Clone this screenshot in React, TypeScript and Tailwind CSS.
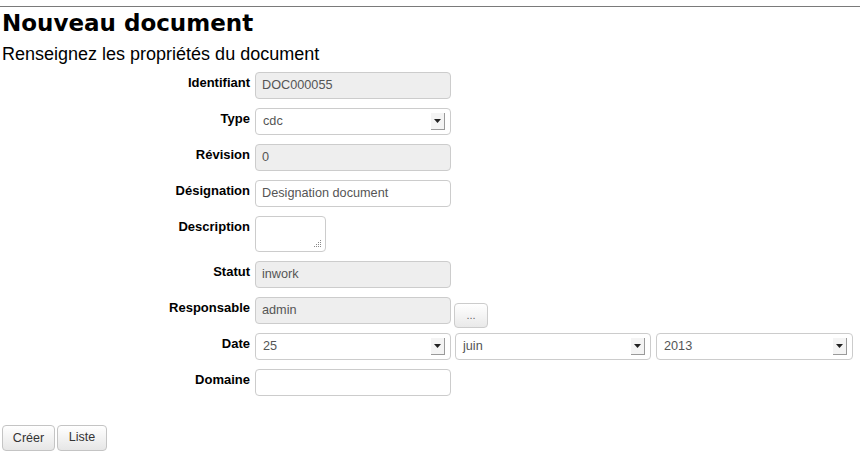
const fieldBox =
  "h-[27px] w-[196px] rounded-[4px] border border-[#cccccc] px-[6px] text-[12.7px] text-[#555555] flex items-center";

function Row({
  label,
  children,
  className = "",
}: {
  label: string;
  children: React.ReactNode;
  className?: string;
}) {
  return (
    <div className={`flex items-start ${className}`}>
      <div className="w-[251px] pr-[1px] pt-[1px] text-right text-[13px] font-bold text-black">
        {label}
      </div>
      <div className="ml-[4px] flex items-start gap-[4px]">{children}</div>
    </div>
  );
}

function SelectArrow() {
  return (
    <span className="ml-auto flex h-[17px] w-[14px] items-center justify-center border-r border-b border-[#9a9a9a] bg-[#f4f4f4]">
      <svg width="7" height="4" viewBox="0 0 7 4">
        <path d="M0 0h7L3.5 4z" fill="#222" />
      </svg>
    </span>
  );
}

function FakeSelect({ value, wide }: { value: string; wide?: boolean }) {
  return (
    <div className={`${fieldBox} bg-white pr-[5px] ${wide ? "w-[197px]" : ""}`}>
      <span className="pl-[1px]">{value}</span>
      <SelectArrow />
    </div>
  );
}

export default function App() {
  return (
    <div className="h-[475px] w-[860px] bg-white font-['Liberation_Sans',Arial,sans-serif]">
      <div className="pt-[6px]">
        <div className="h-px w-full bg-[#7a7a7a]" />
      </div>
      <h1 className="mt-[2px] pl-[2px] font-['DejaVu_Sans',sans-serif] text-[23px] leading-[28px] font-bold text-black">
        Nouveau document
      </h1>
      <h2 className="mt-[6px] pl-[2px] text-[18px] leading-[22px] text-black">
        Renseignez les propriétés du document
      </h2>

      <div className="mt-[7px] flex flex-col gap-[9px]">
        <Row label="Identifiant">
          <div className={`${fieldBox} bg-[#eeeeee]`}>DOC000055</div>
        </Row>
        <Row label="Type">
          <FakeSelect value="cdc" />
        </Row>
        <Row label="Révision">
          <div className={`${fieldBox} bg-[#eeeeee]`}>0</div>
        </Row>
        <Row label="Désignation">
          <div className={`${fieldBox} bg-white`}>Designation document</div>
        </Row>
        <Row label="Description">
          <div className="relative h-[36px] w-[71px] rounded-[4px] border border-[#cccccc] bg-white">
            <svg
              className="absolute right-[4px] bottom-[4px]"
              width="8"
              height="8"
              viewBox="0 0 8 8"
            >
              <g fill="#8a8a8a">
                <rect x="7" y="1" width="1" height="1" />
                <rect x="5" y="3" width="1" height="1" />
                <rect x="7" y="3" width="1" height="1" />
                <rect x="3" y="5" width="1" height="1" />
                <rect x="5" y="5" width="1" height="1" />
                <rect x="7" y="5" width="1" height="1" />
                <rect x="1" y="7" width="1" height="1" />
                <rect x="3" y="7" width="1" height="1" />
                <rect x="5" y="7" width="1" height="1" />
                <rect x="7" y="7" width="1" height="1" />
              </g>
            </svg>
          </div>
        </Row>
        <Row label="Statut">
          <div className={`${fieldBox} bg-[#eeeeee]`}>inwork</div>
        </Row>
        <Row label="Responsable">
          <div className={`${fieldBox} bg-[#eeeeee]`}>admin</div>
          <button className="mt-[6px] -mb-[4px] -ml-[1px] flex h-[25px] w-[34px] items-center justify-center rounded-[4px] border border-[#cccccc] bg-gradient-to-b from-white to-[#e9e9e9] text-[11px] text-[#666666]">
            ...
          </button>
        </Row>
        <Row label="Date">
          <FakeSelect value="25" />
          <div className="flex gap-[5px]">
            <FakeSelect value="juin" />
            <FakeSelect value="2013" wide />
          </div>
        </Row>
        <Row label="Domaine">
          <div className={`${fieldBox} bg-white`} />
        </Row>
      </div>

      <div className="mt-[29px] flex items-start gap-[2px] pl-[2px]">
        <button className="h-[26px] w-[53px] rounded-[4px] border border-[#c4c4c4] bg-gradient-to-b from-white to-[#e6e6e6] text-[12.5px] text-[#333333]">
          Créer
        </button>
        <button className="h-[26px] w-[50px] rounded-[4px] border border-[#c4c4c4] bg-gradient-to-b from-white to-[#e6e6e6] pb-[2px] text-[12.5px] text-[#333333]">
          Liste
        </button>
      </div>
    </div>
  );
}
